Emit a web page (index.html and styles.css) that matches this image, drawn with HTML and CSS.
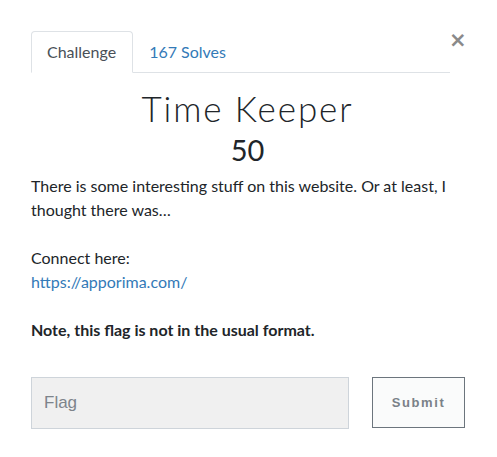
FILE: index.html
```html
<!DOCTYPE html>
<html lang="en">
<head>
  <meta charset="UTF-8">
  <title>Time Keeper</title>
  <link rel="stylesheet" href="styles.css">
</head>
<body>
  <div class="modal">
    <button class="close" type="button">&times;</button>
    <ul class="tabs">
      <li class="tab active">Challenge</li>
      <li class="tab">167 Solves</li>
    </ul>
    <h2 class="title">Time Keeper</h2>
    <h3 class="value">50</h3>
    <div class="description">
      <p>There is some interesting stuff on this website. Or at least, I thought there was&hellip;</p>
      <p>Connect here:<br><a href="#">https://apporima.com/</a></p>
      <p><strong>Note, this flag is not in the usual format.</strong></p>
    </div>
    <form class="submit-row">
      <input type="text" class="flag" placeholder="Flag">
      <button type="submit" class="submit">Submit</button>
    </form>
  </div>
</body>
</html>
```

FILE: styles.css
```css
body {
  margin: 0;
  background: #fff;
  font-family: Lato, "Noto Sans", sans-serif;
  color: #212529;
}
.modal {
  position: relative;
  width: 419px;
  padding: 31px 0 0 31px;
}
.close {
  position: absolute;
  top: 30px;
  left: 449px;
  border: none;
  background: none;
  padding: 0;
  font-family: "DejaVu Sans", sans-serif;
  font-size: 21px;
  font-weight: bold;
  line-height: 1;
  color: #8a8a8a;
  cursor: pointer;
}
.tabs {
  list-style: none;
  margin: 0;
  padding: 0;
  display: flex;
  border-bottom: 1px solid #dee2e6;
  height: 41px;
}
.tab {
  font-size: 16px;
  padding: 0 16px 0 15px;
  line-height: 39px;
  color: #337ab7;
  border: 1px solid transparent;
  border-top-left-radius: 4px;
  border-top-right-radius: 4px;
  margin-bottom: -1px;
}
.tab.active {
  color: #495057;
  border-color: #dee2e6 #dee2e6 #fff;
  background: #fff;
}
.title {
  margin: 15px -14px 0 0;
  text-align: center;
  font-weight: 300;
  font-size: 35px;
  letter-spacing: 1.9px;
  line-height: 40px;
  color: #212529;
}
.value {
  margin: 4px -14px 0 0;
  text-align: center;
  font-weight: 400;
  font-size: 29px;
  line-height: 36px;
}
.description {
  margin-top: 6px;
  font-size: 16px;
  line-height: 24px;
}
.description p {
  margin: 0 0 24px;
}
.description a {
  color: #337ab7;
  text-decoration: none;
}
.submit-row {
  display: flex;
  margin-top: 35px;
}
.flag {
  flex-shrink: 0;
  width: 318px;
  height: 52px;
  box-sizing: border-box;
  background: #f0f0f0;
  border: 1px solid #ced4da;
  padding: 0 12px;
  font-family: "Liberation Sans", Arial, sans-serif;
  font-size: 17px;
  color: #495057;
}
.flag::placeholder {
  color: #7d848b;
}
.submit {
  flex-shrink: 0;
  margin-left: 23px;
  width: 93px;
  height: 51px;
  background: #fafbfb;
  border: 1px solid #6c757d;
  font-family: "Liberation Sans", Arial, sans-serif;
  font-weight: bold;
  font-size: 13px;
  letter-spacing: 1.6px;
  color: #7a8188;
  cursor: pointer;
}
```
